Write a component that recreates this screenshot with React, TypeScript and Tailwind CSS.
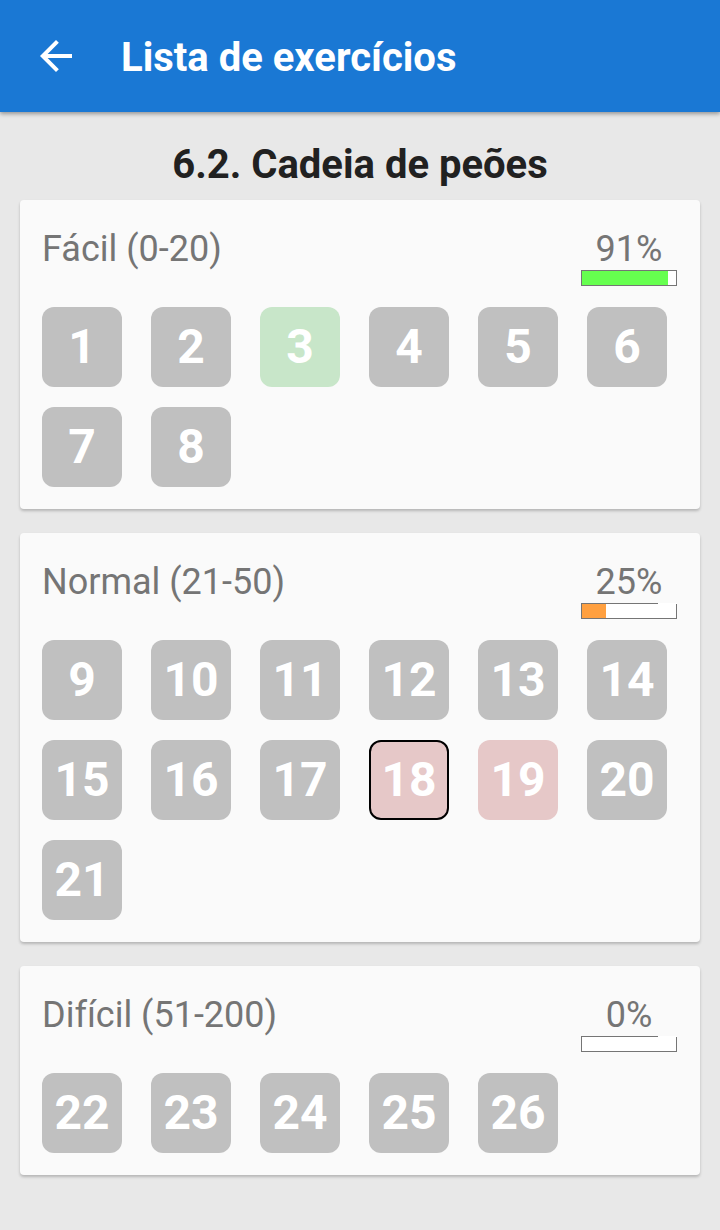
type Tile = { n: number; tone?: 'green' | 'red'; selected?: boolean };

type Section = { title: string; pct: number; fill: string; full: boolean; tiles: Tile[] };

const sections: Section[] = [
  {
    title: 'Fácil (0-20)',
    pct: 91,
    fill: '#66ff4f',
    full: true,
    tiles: [1, 2, 3, 4, 5, 6, 7, 8].map(n => ({ n, tone: n === 3 ? 'green' : undefined })),
  },
  {
    title: 'Normal (21-50)',
    pct: 25,
    fill: '#ffa040',
    full: false,
    tiles: Array.from({ length: 13 }, (_, i) => i + 9).map(n => ({
      n,
      tone: n === 18 || n === 19 ? 'red' : undefined,
      selected: n === 18,
    })),
  },
  {
    title: 'Difícil (51-200)',
    pct: 0,
    fill: '#ffffff',
    full: false,
    tiles: [22, 23, 24, 25, 26].map(n => ({ n })),
  },
];

function Progress({ pct, fill, full }: { pct: number; fill: string; full: boolean }) {
  const w = Math.round((94 * pct) / 100);
  return (
    <svg width="96" height="16" viewBox="0 0 96 16" className="block">
      <rect x="0" y="0" width="96" height="16" fill="#ffffff" />
      {pct > 0 && <rect x="1" y="1" width={w} height="14" fill={fill} />}
      <line x1="0.5" y1="0" x2="0.5" y2="16" stroke="#757575" />
      <line x1="0" y1="15.5" x2="96" y2="15.5" stroke="#757575" />
      <line x1="95.5" y1={full ? 0 : 1} x2="95.5" y2="16" stroke="#757575" />
      <line x1="0" y1="0.5" x2={full ? 96 : 77} y2="0.5" stroke="#757575" />
    </svg>
  );
}

function TileBox({ t }: { t: Tile }) {
  const bg = t.tone === 'green' ? 'bg-[#c8e6c9]' : t.tone === 'red' ? 'bg-[#e6c8c8]' : 'bg-[#c0c0c0]';
  const border = t.selected ? 'border-2 border-black' : '';
  return (
    <div className={`w-[80px] h-[80px] rounded-[12px] flex items-center justify-center ${bg} ${border}`}>
      <span className="text-white font-bold text-[48px] leading-none">{t.n}</span>
    </div>
  );
}

export default function App() {
  return (
    <div className="min-h-[1230px] bg-[#e8e8e8]" style={{ fontFamily: 'Roboto, "Liberation Sans", sans-serif' }}>
      {/* App bar */}
      <div className="h-[112px] bg-[#1a78d4] flex items-center shadow-[0_2px_4px_rgba(0,0,0,0.35)] relative">
        <svg width="48" height="48" viewBox="0 0 24 24" className="ml-[32px]" fill="#ffffff">
          <path d="M20 11H7.83l5.59-5.59L12 4l-8 8 8 8 1.41-1.41L7.83 13H20v-2z" />
        </svg>
        <h1 className="ml-[41px] text-white font-bold text-[40px] leading-none mt-[4px]">Lista de exercícios</h1>
      </div>

      <h2 className="mt-[31px] mb-[13px] text-center text-[#212121] font-bold text-[40px] leading-[44px]">
        6.2. Cadeia de peões
      </h2>

      <div className="px-[20px] flex flex-col gap-[24px] pb-[55px]">
        {sections.map(s => (
          <div key={s.title} className="bg-[#fafafa] rounded-[4px] shadow-[0_2px_3px_rgba(0,0,0,0.22)] pl-[22px] pr-[23px] pt-[29px] pb-[22px]">
            <div className="flex items-start justify-between">
              <div className="text-[#757575] text-[36px] leading-[40px]">{s.title}</div>
              <div className="flex flex-col items-center w-[96px]">
                <div className="text-[#757575] text-[36px] leading-[40px]">{s.pct}%</div>
                <div className="mt-[1px]">
                  <Progress pct={s.pct} fill={s.fill} full={s.full} />
                </div>
              </div>
            </div>
            <div className="mt-[21px] grid grid-cols-[repeat(6,80px)] gap-x-[29px] gap-y-[20px]">
              {s.tiles.map(t => (
                <TileBox key={t.n} t={t} />
              ))}
            </div>
          </div>
        ))}
      </div>
    </div>
  );
}
